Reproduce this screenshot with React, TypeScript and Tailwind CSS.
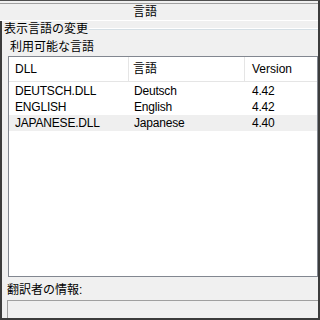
import React from "react";

const rows = [
  { dll: "DEUTSCH.DLL", lang: "Deutsch", ver: "4.42" },
  { dll: "ENGLISH", lang: "English", ver: "4.42" },
  { dll: "JAPANESE.DLL", lang: "Japanese", ver: "4.40", selected: true },
];

function LanguageList() {
  return (
    <div className="mx-[6px] mr-0 h-[221px] border border-[#828790] bg-white">
      <div className="flex h-[25px] border-b border-[#e5e5e5]">
        <div className="flex w-[120px] items-center border-r border-[#e5e5e5] pl-[6px]">DLL</div>
        <div className="flex w-[116px] items-center border-r border-[#e5e5e5] pl-[4px]">言語</div>
        <div className="flex flex-1 items-center pl-[7px]">Version</div>
      </div>
      <div className="pt-[1px]">
        {rows.map((r) => (
          <div
            key={r.dll}
            className={"flex h-[16px] items-center tracking-[-0.2px] " + (r.selected ? "bg-[#efefef]" : "")}
          >
            <div className="w-[120px] pl-[6px]">{r.dll}</div>
            <div className="w-[116px] pl-[5px]">{r.lang}</div>
            <div className="flex-1 pl-[7px]">{r.ver}</div>
          </div>
        ))}
      </div>
    </div>
  );
}

export default function App() {
  return (
    <div
      className="flex h-[320px] w-[320px] flex-col border-t border-r-2 border-t-[#505050] border-r-[#3c3c3c] bg-[#f0f0f0] text-[12px] leading-[16px] text-black"
      style={{ fontFamily: '"Liberation Sans", "Noto Sans CJK JP", sans-serif' }}
    >
      <div className="mt-[2px] flex h-[17px] items-center border-t border-[#a0a0a0] pl-[133px]">言語</div>
      <div className="h-px bg-white" />
      <div className="flex flex-1 flex-col border-b-2 border-l-2 border-[#3c3c3c]">
        <div className="flex h-[16px] items-center pl-[2px]">
          <span>表示言語の変更</span>
          <div className="ml-[1px] h-[2px] flex-1 border-t border-b border-t-white border-b-[#d5dfe5]" />
        </div>
        <div className="mt-[2px] h-[16px] pl-[8px]">利用可能な言語</div>
        <div className="h-[1px]" />
        <LanguageList />
        <div className="mt-[5px] h-[16px] pl-[5px]">翻訳者の情報:</div>
        <div className="ml-[5px] mt-[2px] flex-1 border-t border-l border-[#a0a0a0] bg-[#f0f0f0]" />
      </div>
    </div>
  );
}
